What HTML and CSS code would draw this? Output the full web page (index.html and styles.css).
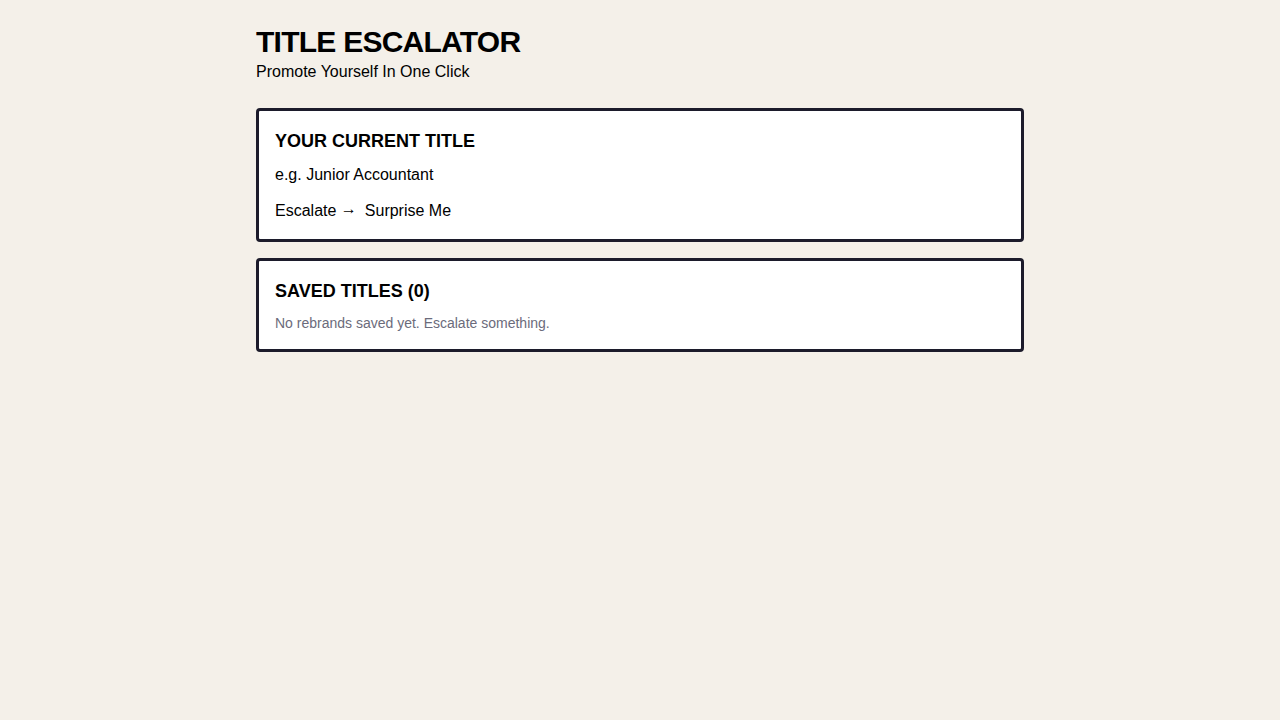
FILE: index.html
```html
<!DOCTYPE html>
<html lang="en">
<head>
<meta charset="utf-8">
<title>Title Escalator</title>
<link rel="stylesheet" href="styles.css">
</head>
<body>
<main class="page">
  <header class="header">
    <h1 class="title">TITLE ESCALATOR</h1>
    <p class="subtitle">Promote Yourself In One Click</p>
  </header>
  <section class="card">
    <h2 class="card-title">YOUR CURRENT TITLE</h2>
    <input class="title-input" type="text" placeholder="e.g. Junior Accountant">
    <div class="actions">
      <button class="btn" type="button">Escalate <span class="arrow">→</span></button>
      <button class="btn" type="button">Surprise Me</button>
    </div>
  </section>
  <section class="card">
    <h2 class="card-title">SAVED TITLES (0)</h2>
    <p class="empty">No rebrands saved yet. Escalate something.</p>
  </section>
</main>
</body>
</html>
```
FILE: styles.css
```css
* { box-sizing: border-box; }
html, body { margin: 0; padding: 0; }
body {
  background: #f4f0e9;
  font-family: "Liberation Sans", Arial, sans-serif;
  color: #000;
}
.page {
  width: 768px;
  margin: 0 auto;
  padding-top: 24px;
  display: flex;
  flex-direction: column;
  gap: 16px;
}
.header { margin-bottom: 8px; }
.title {
  margin: 0;
  font-size: 30px;
  line-height: 36px;
  font-weight: 700;
  letter-spacing: -0.75px;
}
.subtitle {
  margin: 0;
  font-size: 16px;
  line-height: 24px;
}
.card {
  background: #fff;
  border: 3px solid #1c1b2b;
  border-radius: 4px;
  padding: 16px;
}
.card-title {
  margin: 0 0 8px;
  font-size: 18px;
  line-height: 28px;
  font-weight: 700;
}
.title-input {
  display: block;
  width: 100%;
  border: none;
  outline: none;
  padding: 0;
  margin: 0 0 12px;
  font-family: inherit;
  font-size: 16px;
  line-height: 24px;
  height: 24px;
  background: transparent;
  color: #000;
}
.title-input::placeholder { color: #000; opacity: 1; }
.actions {
  display: flex;
  gap: 8px;
  height: 24px;
}
.btn {
  border: none;
  background: none;
  padding: 0;
  font-family: inherit;
  font-size: 16px;
  line-height: 24px;
  height: 24px;
  color: #000;
  cursor: pointer;
}
.arrow {
  line-height: 0;
  vertical-align: 2px;
}
.empty {
  margin: 0;
  font-size: 14px;
  line-height: 20px;
  color: #6b6b7b;
}
```
